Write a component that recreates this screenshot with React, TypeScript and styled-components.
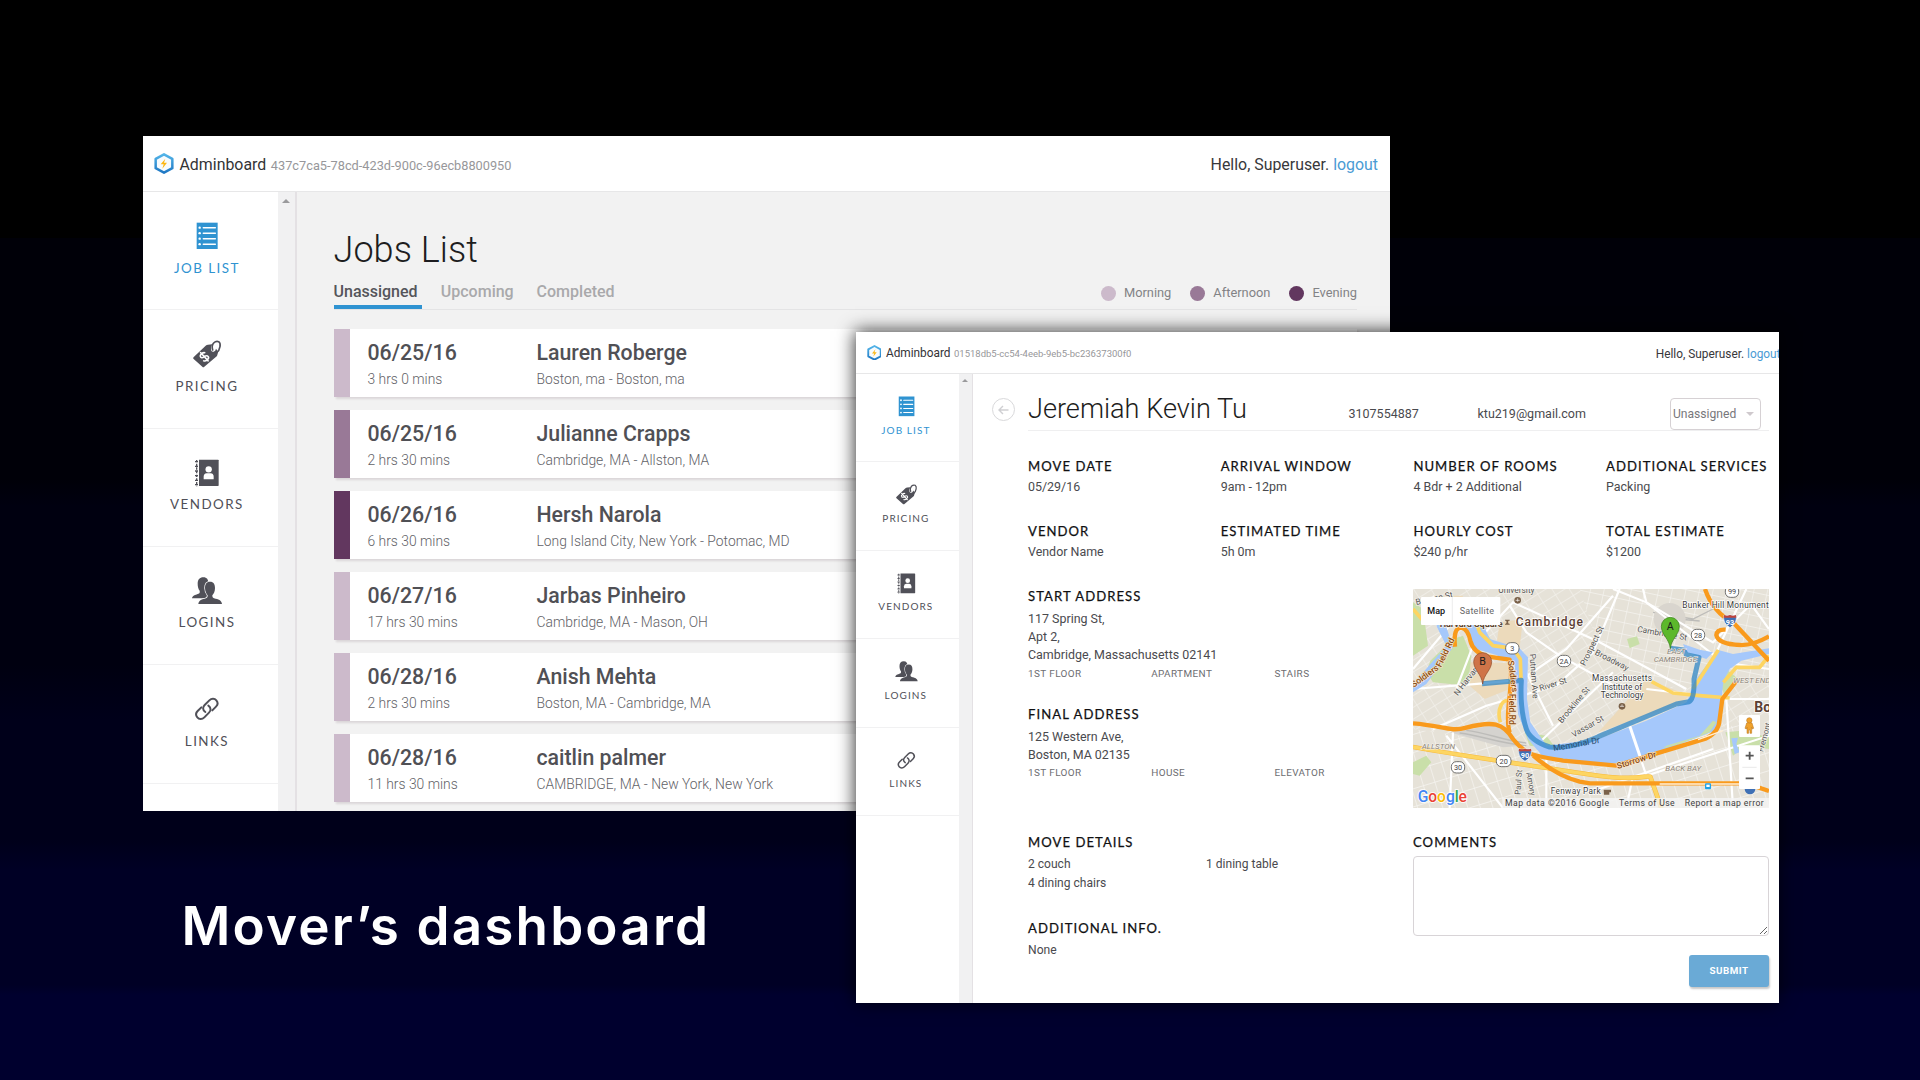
import React from "react";
import styled, { createGlobalStyle, css } from "styled-components";

const BLUE = "#2f93d1";
const MORNING = "#ccbacb";
const AFTERNOON = "#997997";
const EVENING = "#62375f";

const GlobalStyle = createGlobalStyle`
  * { box-sizing: border-box; }
  html, body { margin: 0; padding: 0; background: #000; }
  body { font-family: Roboto, "Liberation Sans", sans-serif; }
`;

const Stage = styled.main`
  position: relative;
  width: 1920px;
  height: 1080px;
  overflow: hidden;
  background: linear-gradient(
    #000 0 238px,
    #000008 238px 480px,
    #000010 506px 665px,
    #00001a 720px 840px,
    #000025 870px 985px,
    #00002e 995px
  );
`;

const Window = styled.section<{ $x: number; $y: number; $w: number; $h: number; $raised?: boolean }>`
  position: absolute;
  left: ${(p) => p.$x}px;
  top: ${(p) => p.$y}px;
  width: ${(p) => p.$w}px;
  height: ${(p) => p.$h}px;
  display: flex;
  flex-direction: column;
  overflow: hidden;
  background: #fff;
  ${(p) => p.$raised && css`box-shadow: -1px -1px 17px rgba(0, 0, 0, 0.8);`}
`;

/* $k scales the shared chrome: 1 for the large window, less for the smaller one */
const Header = styled.header<{ $k: number }>`
  flex: none;
  display: flex;
  align-items: center;
  height: ${(p) => (p.$k === 1 ? 56 : 42)}px;
  padding: 0 ${(p) => (p.$k === 1 ? 12 : 0)}px 0 10.5px;
  border-bottom: ${(p) => (p.$k === 1 ? 1.5 : 1)}px solid #e7e7e8;
  white-space: nowrap;
`;

const Brand = styled.span<{ $k: number }>`
  margin: 1.5px 0 0 ${(p) => 6 * p.$k}px;
  font-size: ${(p) => (p.$k === 1 ? 15.9 : 11.85)}px;
  color: #333336;
`;

const Uuid = styled.span<{ $k: number }>`
  margin: ${(p) => (p.$k === 1 ? 3 : 2.2)}px 0 0 ${(p) => 4.6 * p.$k}px;
  font-size: ${(p) => (p.$k === 1 ? 12.78 : 9.5)}px;
  color: #97979a;
`;

const Greeting = styled.span<{ $k: number }>`
  margin-top: ${(p) => (p.$k === 1 ? 1.5 : 2)}px;
  margin-left: auto;
  margin-right: ${(p) => (p.$k === 1 ? 0 : -1.5)}px;
  font-size: ${(p) => (p.$k === 1 ? 15.9 : 11.85)}px;
  color: #38383b;
`;

const Logout = styled.a`
  color: #4a9bd4;
`;

const Body = styled.div`
  flex: 1;
  min-height: 0;
  display: flex;
`;

const Sidebar = styled.nav<{ $k: number }>`
  flex: none;
  width: ${(p) => (p.$k === 1 ? 134.500 : 102.5)}px;
`;

const NavItem = styled.div<{ $k: number; $active?: boolean }>`
  display: flex;
  flex-direction: column;
  align-items: center;
  height: ${(p) => 118.33 * p.$k}px;
  padding: ${(p) => (p.$k === 1 ? 30 : 22)}px ${(p) => (p.$k === 1 ? 6.5 : 2.5)}px 0 0;
  border-bottom: 1.5px solid #f1f1f2;
  color: ${(p) => (p.$active ? BLUE : "#505058")};
`;

const NavLabel = styled.span<{ $k: number }>`
  margin-top: ${(p) => (p.$k === 1 ? 9.500 : 7.8)}px;
  margin-right: 1px;
  padding-left: ${(p) => 0.9 * p.$k}px;
  font-family: Lato, "Liberation Sans", sans-serif;
  font-size: ${(p) => 13.4 * p.$k}px;
  line-height: ${(p) => 16 * p.$k}px;
  letter-spacing: ${(p) => 1.45 * p.$k}px;
`;

const Scrollbar = styled.div<{ $w: number; $arrow: number }>`
  flex: none;
  width: ${(p) => p.$w}px;
  background: #f1f1f2;
  border-right: ${(p) => (p.$arrow > 3 ? 2 : 1)}px solid #e4e1e4;
  &::before {
    content: "";
    display: block;
    width: 0;
    margin: ${(p) => p.$arrow * 1.8}px auto 0;
    border: ${(p) => p.$arrow}px solid transparent;
    border-top: 0;
    border-bottom-color: #9a9a9c;
  }
`;

/* ---------- jobs list ---------- */

const JobsPane = styled.div`
  flex: 1;
  min-width: 0;
  padding: 36px 33px 0 36.5px;
  background: #f2f2f2;
`;

const PageTitle = styled.h1`
  margin: 0;
  font-size: 36px;
  line-height: 44px;
  font-weight: 300;
  letter-spacing: 0.05px;
  color: #1d1d20;
`;

const TabBar = styled.div`
  display: flex;
  align-items: flex-start;
  height: 29px;
  margin: 9px 0 19px;
  border-bottom: 1px solid #e4e4e5;
`;

const Tab = styled.span<{ $active?: boolean; $w: number }>`
  flex: none;
  width: ${(p) => p.$w}px;
  height: 29px;
  font-size: 16px;
  line-height: 22px;
  font-weight: 500;
  color: ${(p) => (p.$active ? "#55555a" : "#a9a9ab")};
  &::after {
    content: "";
    display: ${(p) => (p.$active ? "block" : "none")};
    width: 88px;
    height: 4px;
    margin-top: 2px;
    background: ${BLUE};
  }
`;

const Legend = styled.div`
  display: flex;
  margin-left: auto;
  gap: 19px;
`;

const LegendItem = styled.span<{ $color: string }>`
  display: flex;
  align-items: center;
  gap: 8px;
  font-size: 12.85px;
  line-height: 24px;
  color: #828285;
  &::before {
    content: "";
    width: 15px;
    height: 15px;
    border-radius: 50%;
    background: ${(p) => p.$color};
  }
`;

const JobRow = styled.article<{ $color: string }>`
  display: flex;
  height: 68px;
  margin-bottom: 13px;
  padding: 11px 0 0 18px;
  border-left: 16px solid ${(p) => p.$color};
  background: #fff;
  box-shadow: 2px 2px 2px rgba(60, 30, 50, 0.13);
`;

const JobCell = styled.div<{ $w?: number }>`
  width: ${(p) => (p.$w ? p.$w + "px" : "auto")};
  white-space: nowrap;
`;

const JobMain = styled.div`
  font-size: 21.3px;
  line-height: 26px;
  font-weight: 500;
  color: #505055;
`;

const JobSub = styled.div`
  margin-top: 4px;
  font-size: 13.87px;
  line-height: 18px;
  font-weight: 300;
  color: #626267;
`;

/* ---------- job detail ---------- */

const DetailPane = styled.div`
  flex: 1;
  min-width: 0;
  display: flex;
  padding-left: 19px;
`;

const BackButton = styled.button`
  flex: none;
  display: grid;
  place-items: center;
  width: 23px;
  height: 23px;
  margin: 24px 13px 0 0;
  padding: 0;
  border: 1.5px solid #d9d9db;
  border-radius: 50%;
  background: #fff;
`;

const Detail = styled.div`
  width: 741px;
  flex: none;
`;

const DetailHeader = styled.div`
  display: flex;
  align-items: baseline;
  height: 57px;
  padding-top: 17px;
  border-bottom: 1.5px solid #efeff0;
`;

const Customer = styled.h2`
  width: 320.5px;
  margin: 0;
  font-size: 27.15px;
  line-height: 36px;
  font-weight: 300;
  color: #1d1d20;
`;

const Contact = styled.span<{ $w: number }>`
  width: ${(p) => p.$w}px;
  font-size: 12.5px;
  line-height: 16px;
  color: #4a4a4e;
`;

const StatusSelect = styled.div`
  display: flex;
  align-items: center;
  justify-content: space-between;
  width: 91.5px;
  height: 32px;
  padding: 0 6.5px 0 2.5px;
  border: 1px solid #d6d1d4;
  border-radius: 4px;
  font-size: 12.1px;
  line-height: 30px;
  color: #77777b;
  &::after {
    content: "";
    border: 4.5px solid transparent;
    border-top-color: #cfc9cd;
    border-bottom: 0;
  }
`;

const Fields = styled.div`
  display: grid;
  grid-template-columns: repeat(4, 192.7px);
  row-gap: 26.3px;
  padding-top: 26.6px;
  white-space: nowrap;
`;

const Label = styled.h3<{ $gap?: number }>`
  margin: 0 0 ${(p) => p.$gap ?? 4.8}px;
  font-family: Lato, "Liberation Sans", sans-serif;
  font-size: 13.1px;
  line-height: 16px;
  font-weight: 400;
  letter-spacing: 1.05px;
  color: #101012;
  -webkit-text-stroke: 0.25px currentColor;
`;

const Value = styled.div<{ $lh?: number; $size?: number }>`
  font-size: ${(p) => p.$size ?? 12.45}px;
  line-height: ${(p) => p.$lh ?? 18}px;
  color: #4a4a4e;
`;

const Split = styled.div<{ $top: number }>`
  display: grid;
  grid-template-columns: 385px 355.5px;
  padding-top: ${(p) => p.$top}px;
`;

const Block = styled.div<{ $h: number }>`
  height: ${(p) => p.$h}px;
`;

const Traits = styled.div`
  display: grid;
  grid-template-columns: repeat(3, 123.2px);
  margin-top: 2.5px;
  font-size: 9.95px;
  line-height: 14px;
  letter-spacing: 0.4px;
  color: #6d6d71;
`;

const Items = styled.div`
  display: grid;
  grid-template-columns: 178px 178px;
`;

const MapFrame = styled.div`
  width: 356px;
  height: 219px;
  margin-top: 1px;
  overflow: hidden;
  svg { display: block; }
`;

const Comments = styled.textarea`
  display: block;
  width: 356px;
  height: 80px;
  border: 1.5px solid #d8d4d7;
  border-radius: 4px;
  background: #fff;
`;

const Submit = styled.button`
  display: block;
  width: 80px;
  height: 32px;
  margin: 19px -0.5px 0 auto;
  padding: 0;
  border: 0;
  border-radius: 3px;
  background: #6aaad6;
  box-shadow: 1px 2px 2px rgba(0, 0, 0, 0.22);
  color: #fff;
  font-family: Roboto, sans-serif;
  font-size: 9.8px;
  font-weight: 700;
  letter-spacing: 0.5px;
`;

const Caption = styled.h1`
  position: absolute;
  left: 181.5px;
  top: 891px;
  margin: 0;
  font-family: Inter, "Open Sans", sans-serif;
  font-size: 53px;
  line-height: 70px;
  font-weight: 600;
  letter-spacing: 2.15px;
  color: #fff;
  white-space: nowrap;
`;

/* ---------- drawings ---------- */

const Logo = ({ k }: { k: number }) => (
  <svg width={20 * k} height={21 * k} viewBox="0 0 60 63">
    <defs>
      <linearGradient id="hex" x1="0" y1="0" x2="0" y2="1">
        <stop offset="0" stopColor="#52b4e8" />
        <stop offset="1" stopColor="#1f78c4" />
      </linearGradient>
    </defs>
    <path d="M30 4 55 17.5V45.5L30 59 5 45.5V17.5Z" fill="#f7fbfe" stroke="url(#hex)" strokeWidth="7.5" strokeLinejoin="round" />
    <path d="M34 17 20 34h9l-4 13 14-18h-9z" fill="#fdb714" />
  </svg>
);

type IconName = "list" | "tag" | "book" | "users" | "link";

const glyphs: Record<IconName, React.ReactNode> = {
  list: (
    <>
      <path d="M11 2h63v79H11z" fill="currentColor" />
      {[17, 33.5, 50, 66.5].map((y) => (
        <g key={y}>
          <circle cx="20" cy={y} r="3.6" fill="#fff" />
          <path d={`M31 ${y}h36`} stroke="#fff" strokeWidth="4.5" strokeLinecap="round" />
        </g>
      ))}
    </>
  ),
  tag: (
    <>
      <path
        d="M1.500 52 38 17q3-3 7-3l13-1q-6 8-4 17 2 7 8 5 6-2 7-9l5 7q2 3 0 8l-2 7L34 80q-3 3-6 0L2 57q-3-2-.5-5Z"
        fill="currentColor"
      />
      <path d="M59 30q-4-13 3-21 7-7 15-4 6 4 4 15-2 12-10 18" fill="none" stroke="currentColor" strokeWidth="5" strokeLinecap="round" />
      <g transform="translate(34 50) rotate(-42)" fill="none" stroke="#fff" strokeWidth="4.600" strokeLinecap="round">
        <path d="M9-8q-3-4-9-4-9 0-9 6 0 5 9 6 9 1 9 7 0 6-9 6-7 0-10-5M0-17v34" />
      </g>
    </>
  ),
  book: (
    <>
      <path d="M18 2h57q2 0 2 2v75q0 2-2 2H18z" fill="currentColor" />
      <path d="M11 3v79" stroke="currentColor" strokeWidth="4" strokeDasharray="7 4" />
      <path d="M6 8h9M6 22h9M6 36h9M6 50h9M6 64h9M6 77h9" stroke="currentColor" strokeWidth="4" />
      <circle cx="47" cy="31" r="9.5" fill="#fff" />
      <path d="M32 61V53q0-9 9-10h12q9 1 9 10v8z" fill="#fff" />
    </>
  ),
  users: (
    <>
      <path d="M31 1c11 0 15 7 15 17 0 9-4 16-7 20 0 7 1 10 4 12v14H-3c1-8 9-10 19-14 4-1 5-4 4-9-4-5-6-12-6-21C14 8 20 1 31 1Z" fill="currentColor" />
      <path
        d="M51 14c11 0 15 8 15 19s-4 17-8 22c0 5 1 7 5 9 13 3 23 6 24 17H16c1-11 11-14 23-17 4-2 5-4 5-9-4-5-8-12-8-22 0-11 4-19 15-19Z"
        fill="currentColor"
        stroke="#fff"
        strokeWidth="4.500"
        paintOrder="stroke"
      />
    </>
  ),
  link: (
    <g fill="none" stroke="currentColor" strokeWidth="6" strokeLinecap="round">
      <path d="M37 51c-9-6-8-15-2-21L49 16c7-7 16-6 21 0 5 6 5 13-1 19L58 46" />
      <path d="M46 32c9 6 8 15 2 21L34 67c-7 7-16 6-21 0-5-6-5-13 1-19L25 37" />
    </g>
  ),
};

const Icon = ({ name, k }: { name: IconName; k: number }) => (
  <svg width={28 * k} height={28 * k} viewBox="0 0 84 84" overflow="visible">
    {glyphs[name]}
  </svg>
);

const nav: { icon: IconName; label: string }[] = [
  { icon: "list", label: "JOB LIST" },
  { icon: "tag", label: "PRICING" },
  { icon: "book", label: "VENDORS" },
  { icon: "users", label: "LOGINS" },
  { icon: "link", label: "LINKS" },
];

const Nav = ({ k }: { k: number }) => (
  <Sidebar $k={k}>
    {nav.map((n, i) => (
      <NavItem key={n.label} $k={k} $active={i === 0}>
        <Icon name={n.icon} k={k} />
        <NavLabel $k={k}>{n.label}</NavLabel>
      </NavItem>
    ))}
  </Sidebar>
);

const TopBar = ({ k, id }: { k: number; id: string }) => (
  <Header $k={k}>
    <Logo k={k} />
    <Brand $k={k}>Adminboard</Brand>
    <Uuid $k={k}>{id}</Uuid>
    <Greeting $k={k}>
      Hello, Superuser. <Logout>logout</Logout>
    </Greeting>
  </Header>
);

const Pin = ({ x, y, color, edge, letter }: { x: number; y: number; color: string; edge: string; letter: string }) => (
  <g transform={`translate(${x} ${y})`}>
    <path d="M0 0C-3-30-27-42-27-67a27 27 0 0 1 54 0C27-42 3-30 0 0Z" fill={color} stroke={edge} strokeWidth="2" />
    <text x="0" y="-56" textAnchor="middle" fontSize="32" fill="#1c1c1c">{letter}</text>
  </g>
);

const Shield = ({ x, y, t, w = 40 }: { x: number; y: number; t: string; w?: number }) => (
  <g transform={`translate(${x} ${y})`}>
    <rect x={-w / 2} y="-17" width={w} height="34" rx="15" fill="#fff" stroke="#555" strokeWidth="2.500" />
    <text y="8" textAnchor="middle" fontSize="22" fill="#444">{t}</text>
  </g>
);

const Interstate = ({ x, y, t }: { x: number; y: number; t: string }) => (
  <g transform={`translate(${x} ${y})`}>
    <path d="M-18-17q9 4 18 0 9 4 18 0 6 24-18 38-24-14-18-38Z" fill="#3f70b5" stroke="#fff" strokeWidth="2" />
    <path d="M-18-17q9 4 18 0 9 4 18 0l1 8h-38Z" fill="#c0443c" />
    <text y="12" textAnchor="middle" fontSize="22" fontWeight="700" fill="#fff">{t}</text>
  </g>
);

const streetLabels: [string, number, number, number, number][] = [
  ["N Harvard", 134, 322, -52, 25],
  ["Putnam Ave", 350, 195, 86, 25],
  ["River St", 382, 306, -17, 25],
  ["Brookline St", 446, 404, -50, 25],
  ["Vassar St", 482, 446, -30, 25],
  ["Prospect St", 516, 232, -64, 25],
  ["Broadway", 544, 196, 27, 25],
  ["Cambridge St", 672, 128, 10, 25],
  ["Paul St", 322, 618, -86, 24],
  ["Amory", 340, 552, 80, 24],
  ["Fremont", 1050, 490, -75, 24],
];

const MapArt = () => (
  <svg width="356" height="219" viewBox="0 0 1068 657" fontFamily="Roboto, sans-serif">
    <defs>
      <pattern id="gridA" width="44" height="30" patternUnits="userSpaceOnUse" patternTransform="rotate(-32)">
        <path d="M0 0H44M0 0V30" stroke="#fff" strokeWidth="4" fill="none" />
      </pattern>
      <pattern id="gridB" width="36" height="52" patternUnits="userSpaceOnUse" patternTransform="rotate(-17)">
        <path d="M0 0H36M0 0V52" stroke="#fff" strokeWidth="4" fill="none" />
      </pattern>
      <pattern id="gridC" width="40" height="34" patternUnits="userSpaceOnUse" patternTransform="rotate(12)">
        <path d="M0 0H40M0 0V34" stroke="#fff" strokeWidth="4" fill="none" />
      </pattern>
    </defs>
    <rect width="1068" height="657" fill="#e6e2d8" />
    <path d="M0 0H1068V657H0Z" fill="url(#gridA)" opacity=".5" />
    <path d="M0 420 340 470 1068 400V657H0Z" fill="#e6e2d8" />
    <path d="M0 420 340 470 1068 400V657H0Z" fill="url(#gridB)" opacity=".65" />
    <path d="M500 0H1068V260L720 300 560 180Z" fill="#e6e2d8" />
    <path d="M500 0H1068V260L720 300 560 180Z" fill="url(#gridC)" opacity=".6" />

    <g fill="#ecdabb">
      <path d="M170 220 290 222 290 300 215 330 170 290Z" />
      <path d="M556 430 700 270 830 320 800 345Z" />
      <path d="M60 20 150 20 130 100 60 100Z" />
      <path d="M260 100 330 90 320 175 250 170Z" />
    </g>
    <g fill="#c9dfa9">
      <path d="M52 215 120 150 150 140 175 200 165 290 60 280 40 250Z" />
      <path d="M0 40 30 60 45 170 0 200Z" />
      <path d="M130 100 175 70 240 160 220 175Z" />
      <path d="M335 430 400 440 430 480 350 470Z" />
      <path d="M642 150 672 142 680 165 650 178Z" />
      <path d="M937 430 985 425 1068 445V480L1000 470 960 500Z" />
      <path d="M0 520 40 500 55 520 20 560 0 555Z" />
      <path d="M915 270 945 245 970 265 935 320Z" />
    </g>
    <path d="M110 430 250 408 330 470 270 475Z" fill="#d5d3cf" />
    <g stroke="#bdbcb9" strokeWidth="4" fill="none">
      <path d="M140 432C210 440 240 460 340 470M160 424C220 430 270 455 340 462M720 70 840 90 900 60M730 84 860 96" />
    </g>
    <circle cx="770" cy="90" r="48" fill="#d9d5ce" />

    <g fill="none" stroke="#fff" strokeWidth="6.500">
      <path d="M0 300 211 283 325 272 460 180 600 20" />
      <path d="M60 20 110 110 0 240M130 300 180 170 300 40 560 160 820 300" />
      <path d="M290 50 340 130 440 200 620 300 M330 230 420 410" />
      <path d="M60 420 220 350 430 290 540 190 620 0" />
      <path d="M600 0 700 40 930 220 1068 240" />
      <path d="M690 0 700 40 900 160 1020 40M910 190 1000 0M1010 40 1068 120" />
      <path d="M650 410 700 560M700 560 1068 440M560 600 900 480" />
      <path d="M120 430 110 657M100 440 270 657M640 657 660 560M940 330 960 657" />
      <path d="M400 470 400 657M940 330H1068M700 300 870 320M380 460 600 250" />
    </g>

    <g fill="#a5c8fb">
      <path d="M401 470 556 450 700 395 821 340 845 275 916 183 960 195 1068 178V195L985 215 950 240 931 275 925 340 920 400 905 425 731 493 611 523 531 525 391 505 345 450 315 375 305 225 250 198 190 180 150 118 135 60 160 25 190 60 230 150 320 178 345 205 342 330 352 400Z" />
      <path d="M0 285 70 205 100 170 70 110 92 90 120 175 40 285 0 310Z" />
      <path d="M60 30 100 120 80 130 60 60Z" />
      <path d="M955 448 975 446 970 465 980 490 965 495Z" />
      <path d="M810 165 860 182 900 190 880 210 820 190Z" />
    </g>
    <path d="M760 470 860 440 900 395 910 400 890 430 800 465 750 478Z" fill="#c9dfa9" />
    <path d="M650 410 682 505" stroke="#fff" strokeWidth="9" />

    <g fill="none" stroke="#f7b93c" strokeWidth="14" strokeLinejoin="round">
      <path d="M0 474C140 500 360 530 520 555S690 558 712 563L745 657" />
    </g>
    <g fill="none" stroke="#fdd562" strokeWidth="11" strokeLinejoin="round">
      <path d="M0 474C140 500 360 530 520 555S690 558 712 563L745 657" />
      <path d="M135 30 175 60 200 130 240 170 300 178 322 210 324 272" />
      <path d="M716 278 780 312 860 320 950 327M916 183 840 300M931 280 970 235 1040 235 1068 200" />
      <path d="M0 60 30 95M262 400C250 360 270 320 295 340" />
    </g>
    <g fill="none" stroke="#f99a1c" strokeWidth="13" strokeLinejoin="round">
      <path d="M0 403C90 410 110 430 160 416 240 395 270 402 300 450 340 500 360 500 450 515L611 530 731 493 880 448Q918 430 920 390L928 330 975 270" />
      <path d="M126 173Q120 115 145 116 165 120 172 155 180 190 225 203L290 212Q298 250 290 320 280 400 290 430" />
      <path d="M361 500Q430 560 500 578L531 583 1000 583 1068 606" />
      <path d="M876 0Q900 70 960 100L1068 215M1068 142Q1020 170 980 168 915 165 910 138 912 120 938 122" />
    </g>
    <path d="M740 585H1000M855 452 930 425" stroke="#fff0d8" strokeWidth="4" fill="none" />

    <path
      d="M207 284 325 274Q320 360 340 420 352 455 410 474 470 482 556 443L790 345 828 338Q845 330 843 270L858 205 820 197 812 183 771 178"
      fill="none"
      stroke="#2f86c6"
      strokeOpacity=".75"
      strokeWidth="15"
      strokeLinejoin="round"
    />

    <g fill="#555" stroke="#f4f1ea" strokeWidth="4" paintOrder="stroke">
      {streetLabels.map(([t, x, y, r, s]) => (
        <text key={t} transform={`translate(${x} ${y}) rotate(${r})`} fontSize={s}>{t}</text>
      ))}
      <text x="256" y="13" fontSize="25">University</text>
      <text x="10" y="48" fontSize="25" transform="rotate(-12 10 48)">Beacon St</text>
      <text x="80" y="113" fontSize="27" fontWeight="700" fill="#5c4433">Harvard Square</text>
    </g>
    <g fill="#8a4b12" stroke="#fbe6c8" strokeWidth="4" paintOrder="stroke" fontSize="26" fontWeight="500">
      <text transform="translate(2 296) rotate(-36)">Soldiers</text>
      <text transform="translate(84 236) rotate(-64)">Field Rd</text>
      <text transform="translate(284 216) rotate(82)">Soldiers</text>
      <text transform="translate(288 314) rotate(90)">Field Rd</text>
      <text transform="translate(614 540) rotate(-17)">Storrow Dr</text>
    </g>
    <text transform="translate(422 486) rotate(-10)" fontSize="26" fill="#2d4d6e">Memorial Dr</text>
    <g fill="#3a3a3a" stroke="#fff" strokeWidth="4" paintOrder="stroke" fontSize="25">
      <text x="808" y="56" textLength="259">Bunker Hill Monument</text>
      <text x="627" y="276" textAnchor="middle" textLength="180">Massachusetts</text>
      <text x="627" y="302" textAnchor="middle">Institute of</text>
      <text x="627" y="328" textAnchor="middle">Technology</text>
      <text x="413" y="615" textLength="150">Fenway Park</text>
    </g>
    <g fill="#8b8378" stroke="#f4f1ea" strokeWidth="3" paintOrder="stroke" fontStyle="italic" fontSize="24">
      <text x="26" y="479">ALLSTON</text>
      <text x="762" y="194">EAST</text>
      <text x="722" y="219">CAMBRIDGE</text>
      <text x="960" y="281">WEST END</text>
      <text x="757" y="546">BACK BAY</text>
    </g>
    <g fill="#5b4033" stroke="#fff" strokeWidth="5" paintOrder="stroke" fontWeight="500">
      <text x="308" y="111" fontSize="36" textLength="202">Cambridge</text>
      <text x="1024" y="368" fontSize="42" fontWeight="700">Boston</text>
    </g>
    <g fill="#7a6149">
      <path d="M276 92h14v3h-3l-2 4 2 5h3v3h-14v-3h3l2-5-2-4h-3z" />
      <circle cx="627" cy="352" r="10" />
      <circle cx="314" cy="34" r="10" />
      <path d="M572 602h22v8h-5v7h-16z" />
    </g>
    <g fill="none" stroke="#fff" strokeWidth="2">
      <path d="M621 352h12M627 346v6M308 34h12M314 28v10" />
    </g>

    <Shield x={298} y={178} t="3" />
    <Shield x={453} y={216} t="2A" />
    <Shield x={272} y={516} t="20" w={44} />
    <Shield x={135} y={535} t="30" />
    <Shield x={855} y={138} t="28" />
    <Shield x={957} y={8} t="99" />
    <Interstate x={336} y={496} t="90" />
    <Interstate x={951} y={95} t="93" />
    <circle cx="1011" cy="600" r="16" fill="#3f70b5" />
    <rect x="876" y="583" width="18" height="18" rx="3" fill="#1ea3e8" />
    <rect x="880" y="587" width="10" height="7" fill="#fff" />

    <Pin x={209} y={285} color="#cf7448" edge="#8f4a2b" letter="B" />
    <Pin x={772} y={179} color="#5cb82c" edge="#357a16" letter="A" />

    <rect x="24" y="24" width="238" height="84" rx="3" fill="#fff" />
    <path d="M118 24V108" stroke="#e4e4e4" strokeWidth="2" />
    <text x="43" y="74" fontSize="27" fontWeight="500" fill="#111">Map</text>
    <text x="140" y="74" fontSize="27" fill="#666" textLength="103">Satellite</text>

    <rect x="978" y="378" width="63" height="66" rx="3" fill="#fff" />
    <g fill="#f0a22c" stroke="#b26e18" strokeWidth="1.500">
      <path d="M1001 402q8-4 16 0l5 16-4 2-2-5v18h-5v-10h-4v10h-5v-18l-2 5-4-2Z" />
      <circle cx="1009" cy="394" r="8" />
    </g>
    <rect x="978" y="469" width="63" height="131" rx="3" fill="#fff" />
    <path d="M988 535h43" stroke="#e6e6e6" strokeWidth="2.500" />
    <path d="M998 500h24M1010 488v24M998 568h24" stroke="#555" strokeWidth="5.500" />

    <rect x="268" y="627" width="800" height="30" fill="#f5f5f5" opacity=".78" />
    <g fontSize="26" fill="#3f3f3f">
      <text x="276" y="652" textLength="312">Map data ©2016 Google</text>
      <text x="618" y="652" textLength="167">Terms of Use</text>
      <text x="815" y="652" textLength="237">Report a map error</text>
    </g>
    <text x="14" y="638" fontSize="47" stroke="#fff" strokeWidth="5" paintOrder="stroke" textLength="148" fontWeight="500">
      <tspan fill="#4285f4">G</tspan>
      <tspan fill="#ea4335">o</tspan>
      <tspan fill="#fbbc05">o</tspan>
      <tspan fill="#4285f4">g</tspan>
      <tspan fill="#34a853">l</tspan>
      <tspan fill="#ea4335">e</tspan>
    </text>
  </svg>
);

/* ---------- data ---------- */

const jobs = [
  { color: MORNING, date: "06/25/16", time: "3 hrs 0 mins", name: "Lauren Roberge", route: "Boston, ma - Boston, ma" },
  { color: AFTERNOON, date: "06/25/16", time: "2 hrs 30 mins", name: "Julianne Crapps", route: "Cambridge, MA - Allston, MA" },
  { color: EVENING, date: "06/26/16", time: "6 hrs 30 mins", name: "Hersh Narola", route: "Long Island City, New York - Potomac, MD" },
  { color: MORNING, date: "06/27/16", time: "17 hrs 30 mins", name: "Jarbas Pinheiro", route: "Cambridge, MA - Mason, OH" },
  { color: MORNING, date: "06/28/16", time: "2 hrs 30 mins", name: "Anish Mehta", route: "Boston, MA - Cambridge, MA" },
  { color: MORNING, date: "06/28/16", time: "11 hrs 30 mins", name: "caitlin palmer", route: "CAMBRIDGE, MA - New York, New York" },
];

const fields = [
  ["MOVE DATE", "05/29/16"],
  ["ARRIVAL WINDOW", "9am - 12pm"],
  ["NUMBER OF ROOMS", "4 Bdr + 2 Additional"],
  ["ADDITIONAL SERVICES", "Packing"],
  ["VENDOR", "Vendor Name"],
  ["ESTIMATED TIME", "5h 0m"],
  ["HOURLY COST", "$240 p/hr"],
  ["TOTAL ESTIMATE", "$1200"],
];

const addresses = [
  { label: "START ADDRESS", lines: ["117 Spring St,", "Apt 2,", "Cambridge, Massachusetts 02141"], traits: ["1ST FLOOR", "APARTMENT", "STAIRS"], h: 118 },
  { label: "FINAL ADDRESS", lines: ["125 Western Ave,", "Boston, MA 02135"], traits: ["1ST FLOOR", "HOUSE", "ELEVATOR"], h: 128.6 },
];

export default function App() {
  return (
    <Stage>
      <GlobalStyle />
      <Window $x={143} $y={136} $w={1247} $h={675}>
        <TopBar k={1} id="437c7ca5-78cd-423d-900c-96ecb8800950" />
        <Body>
          <Nav k={1} />
          <Scrollbar $w={19.5} $arrow={4} />
          <JobsPane>
            <PageTitle>Jobs List</PageTitle>
            <TabBar>
              <Tab $active $w={107.3}>Unassigned</Tab>
              <Tab $w={95.8}>Upcoming</Tab>
              <Tab $w={90}>Completed</Tab>
              <Legend>
                <LegendItem $color={MORNING}>Morning</LegendItem>
                <LegendItem $color={AFTERNOON}>Afternoon</LegendItem>
                <LegendItem $color={EVENING}>Evening</LegendItem>
              </Legend>
            </TabBar>
            {jobs.map((j) => (
              <JobRow key={j.name} $color={j.color}>
                <JobCell $w={169}>
                  <JobMain>{j.date}</JobMain>
                  <JobSub>{j.time}</JobSub>
                </JobCell>
                <JobCell>
                  <JobMain>{j.name}</JobMain>
                  <JobSub>{j.route}</JobSub>
                </JobCell>
              </JobRow>
            ))}
          </JobsPane>
        </Body>
      </Window>

      <Caption>Mover’s dashboard</Caption>

      <Window $x={856} $y={332} $w={923} $h={671} $raised>
        <TopBar k={0.747} id="01518db5-cc54-4eeb-9eb5-bc23637300f0" />
        <Body>
          <Nav k={0.747} />
          <Scrollbar $w={14.5} $arrow={3} />
          <DetailPane>
            <BackButton aria-label="Back">
              <svg width="11" height="10" viewBox="0 0 11 10" fill="none" stroke="#cfcfd2" strokeWidth="1.400">
                <path d="M10.500 5H1M5 1 1 5l4 4" />
              </svg>
            </BackButton>
            <Detail>
              <DetailHeader>
                <Customer>Jeremiah Kevin Tu</Customer>
                <Contact $w={129}>3107554887</Contact>
                <Contact $w={192}>ktu219@gmail.com</Contact>
                <StatusSelect>Unassigned</StatusSelect>
              </DetailHeader>
              <Fields>
                {fields.map(([label, value]) => (
                  <div key={label}>
                    <Label>{label}</Label>
                    <Value>{value}</Value>
                  </div>
                ))}
              </Fields>
              <Split $top={26.4}>
                <div>
                  {addresses.map((a) => (
                    <Block key={a.label} $h={a.h}>
                      <Label $gap={5.7}>{a.label}</Label>
                      {a.lines.map((l) => (
                        <Value key={l} $lh={18.2}>{l}</Value>
                      ))}
                      <Traits>
                        {a.traits.map((t) => (
                          <span key={t}>{t}</span>
                        ))}
                      </Traits>
                    </Block>
                  ))}
                </div>
                <MapFrame>
                  <MapArt />
                </MapFrame>
              </Split>
              <Split $top={0}>
                <div>
                  <Block $h={86}>
                    <Label>MOVE DETAILS</Label>
                    <Items>
                      <Value $lh={19} $size={12.05}>2 couch</Value>
                      <Value $lh={19} $size={12.05}>1 dining table</Value>
                      <Value $lh={19} $size={12.05}>4 dining chairs</Value>
                    </Items>
                  </Block>
                  <Label>ADDITIONAL INFO.</Label>
                  <Value $size={12.1}>None</Value>
                </div>
                <div>
                  <Label $gap={5.2}>COMMENTS</Label>
                  <Comments aria-label="Comments" />
                  <Submit>SUBMIT</Submit>
                </div>
              </Split>
            </Detail>
          </DetailPane>
        </Body>
      </Window>
    </Stage>
  );
}
